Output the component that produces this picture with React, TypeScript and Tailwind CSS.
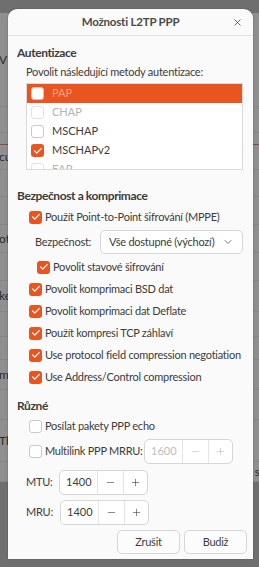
import { Check, ChevronDown, Minus, Plus, X } from "lucide-react";

const FONT = "font-['Lato',sans-serif]";
const TXT = "text-[11px] tracking-[-0.25px] text-[#3c3c3c]";
const HEAD = "text-[12px] font-bold tracking-[-0.4px] leading-[17px] text-[#3c3c3c]";

function Box({ checked, faded }: { checked?: boolean; faded?: boolean }) {
  if (checked) {
    return (
      <span className="flex h-[13px] w-[13px] shrink-0 items-center justify-center rounded-[3px] bg-[#e95420]">
        <Check size={10} strokeWidth={3} className="text-white" />
      </span>
    );
  }
  return (
    <span
      className={
        "h-[13px] w-[13px] shrink-0 rounded-[3px] border bg-white " +
        (faded ? "border-[#e2e2e2]" : "border-[#c9c9c9]")
      }
    />
  );
}

function CheckRow({ label, checked, indent = "pl-[21px]" }: { label: string; checked?: boolean; indent?: string }) {
  return (
    <div className={"flex h-[22px] items-center gap-[3px] whitespace-nowrap " + indent}>
      <Box checked={checked} />
      <span className={TXT}>{label}</span>
    </div>
  );
}

function Spin({ value, disabled }: { value: string; disabled?: boolean }) {
  const c = disabled ? "text-[#bdbdbd]" : "text-[#3c3c3c]";
  return (
    <div className="flex h-[25px] w-[89px] rounded-[5px] border border-[#d6d6d6] bg-white">
      <div className={"flex w-[37px] items-center pl-[6px] text-[11px] " + c}>{value}</div>
      <div className={"flex w-[26px] items-center justify-center border-l border-[#e4e4e4] " + c}>
        <Minus size={11} strokeWidth={1.3} />
      </div>
      <div className={"flex flex-1 items-center justify-center border-l border-[#e4e4e4] " + c}>
        <Plus size={11} strokeWidth={1.3} />
      </div>
    </div>
  );
}

const LIST = [
  { name: "PAP", sel: true },
  { name: "CHAP", dim: true },
  { name: "MSCHAP" },
  { name: "MSCHAPv2", checked: true },
  { name: "EAP", dim: true },
];

const BG_ROWS = [
  { h: 94, l: "V", r: "" },
  { h: 26, l: "", r: "" },
  { h: 12, l: "", r: "", orange: true },
  { h: 25, l: "cu", r: "" },
  { h: 27, l: "", r: "" },
  { h: 28, l: "", r: "" },
  { h: 28, l: "ot", r: "" },
  { h: 28, l: "", r: "" },
  { h: 31, l: "ke", r: "" },
  { h: 25, l: "", r: "" },
  { h: 23, l: "", r: "" },
  { h: 30, l: "m", r: "" },
  { h: 30, l: "", r: "" },
  { h: 42, l: "Th", r: "" },
  { h: 20, l: "", r: "s" },
];

export default function App() {
  return (
    <div className={"relative h-[567px] w-[259px] overflow-hidden bg-[#6f6f6f] " + FONT}>
      {/* dimmed parent window */}
      <div className="mt-[13px] flex flex-col bg-[#8f8f8f] text-[12px] text-[#2a2a2a]">
        {BG_ROWS.map((r, i) => (
          <div
            key={i}
            style={{ height: r.h }}
            className={
              "flex items-center justify-between border-b " +
              (r.orange ? "border-[#8f4a30]" : "border-[#858585]")
            }
          >
            <span className="-ml-[1px]">{r.l}</span>
            <span className="mr-[-1px]">{r.r}</span>
          </div>
        ))}
      </div>

      {/* dialog */}
      <div className="absolute left-[8px] top-[9px] flex h-[550px] w-[245px] flex-col rounded-t-[9px] bg-[#fafafa] shadow-[0_0_2px_rgba(0,0,0,0.3)]">
        <div className="relative flex h-[27px] shrink-0 items-center justify-center border-b border-[#e3e3e3]">
          <span className="text-[11.5px] font-bold tracking-[-0.2px] text-[#4a4a4a]">Možnosti L2TP PPP</span>
          <X size={11} strokeWidth={1.8} className="absolute right-[10px] top-[8px] text-[#4a4a4a]" />
        </div>

        <div className="flex flex-col">
          <div className={"mt-[8px] pl-[9px] " + HEAD}>Autentizace</div>
          <div className={"mt-[2px] pl-[18px] leading-[17px] " + TXT}>Povolit následující metody autentizace:</div>
          <div className="ml-[18px] mt-[3px] h-[87px] w-[217px] overflow-hidden border border-[#dadada] bg-white">
            {LIST.map((it) => (
              <div
                key={it.name}
                className={
                  "flex h-[19px] items-center gap-[8px] pl-[4px] " + (it.sel ? "bg-[#e95420]" : "")
                }
              >
                {it.sel ? (
                  <span className="h-[13px] w-[13px] shrink-0 rounded-[3px] border border-[#f6b9a2] bg-white" />
                ) : (
                  <Box checked={it.checked} faded={it.dim} />
                )}
                <span
                  className={
                    "text-[11px] " +
                    (it.sel ? "text-[#f4a283]" : it.dim ? "text-[#b3b3b3]" : "text-[#3c3c3c]")
                  }
                >
                  {it.name}
                </span>
              </div>
            ))}
          </div>

          <div className={"mt-[17px] pl-[9px] " + HEAD}>Bezpečnost a komprimace</div>
          <div className="mt-[2px]">
            <CheckRow label="Použít Point-to-Point šifrování (MPPE)" checked />
          </div>
          <div className="mt-[2px] flex h-[24px] items-center pl-[27px]">
            <span className={"w-[65px] " + TXT}>Bezpečnost:</span>
            <div className="flex h-[24px] w-[143px] items-center justify-between rounded-[5px] border border-[#d6d6d6] bg-white pl-[8px] pr-[8px]">
              <span className={"whitespace-nowrap " + TXT}>Vše dostupné (výchozí)</span>
              <ChevronDown size={12} strokeWidth={1.5} className="text-[#4a4a4a]" />
            </div>
          </div>
          <div className="mt-[2px]">
            <CheckRow label="Povolit stavové šifrování" checked indent="pl-[29px]" />
          </div>
          <CheckRow label="Povolit komprimaci BSD dat" checked />
          <CheckRow label="Povolit komprimaci dat Deflate" checked />
          <CheckRow label="Použít kompresi TCP záhlaví" checked />
          <CheckRow label="Use protocol field compression negotiation" checked />
          <CheckRow label="Use Address/Control compression" checked />

          <div className={"mt-[9px] pl-[9px] " + HEAD}>Různé</div>
          <div className="mt-[1px]">
            <CheckRow label="Posílat pakety PPP echo" />
          </div>
          <div className="mt-[2px] flex h-[25px] items-center pl-[21px]">
            <div className="flex w-[115px] items-center gap-[3px] whitespace-nowrap">
              <Box />
              <span className={TXT}>Multilink PPP MRRU:</span>
            </div>
            <Spin value="1600" disabled />
          </div>
          <div className="mt-[6px] flex h-[25px] items-center pl-[18px]">
            <span className={"w-[33px] " + TXT}>MTU:</span>
            <Spin value="1400" />
          </div>
          <div className="mt-[5px] flex h-[25px] items-center pl-[18px]">
            <span className={"w-[34px] " + TXT}>MRU:</span>
            <Spin value="1400" />
          </div>
          <div className="mt-[5px] flex gap-[4px] pl-[109px]">
            <button className={"h-[24px] w-[63px] rounded-[5px] border border-[#d6d6d6] bg-[#fcfcfc] " + TXT}>
              Zrušit
            </button>
            <button className={"h-[24px] w-[63px] rounded-[5px] border border-[#d6d6d6] bg-[#fcfcfc] " + TXT}>
              Budiž
            </button>
          </div>
        </div>
      </div>
    </div>
  );
}
